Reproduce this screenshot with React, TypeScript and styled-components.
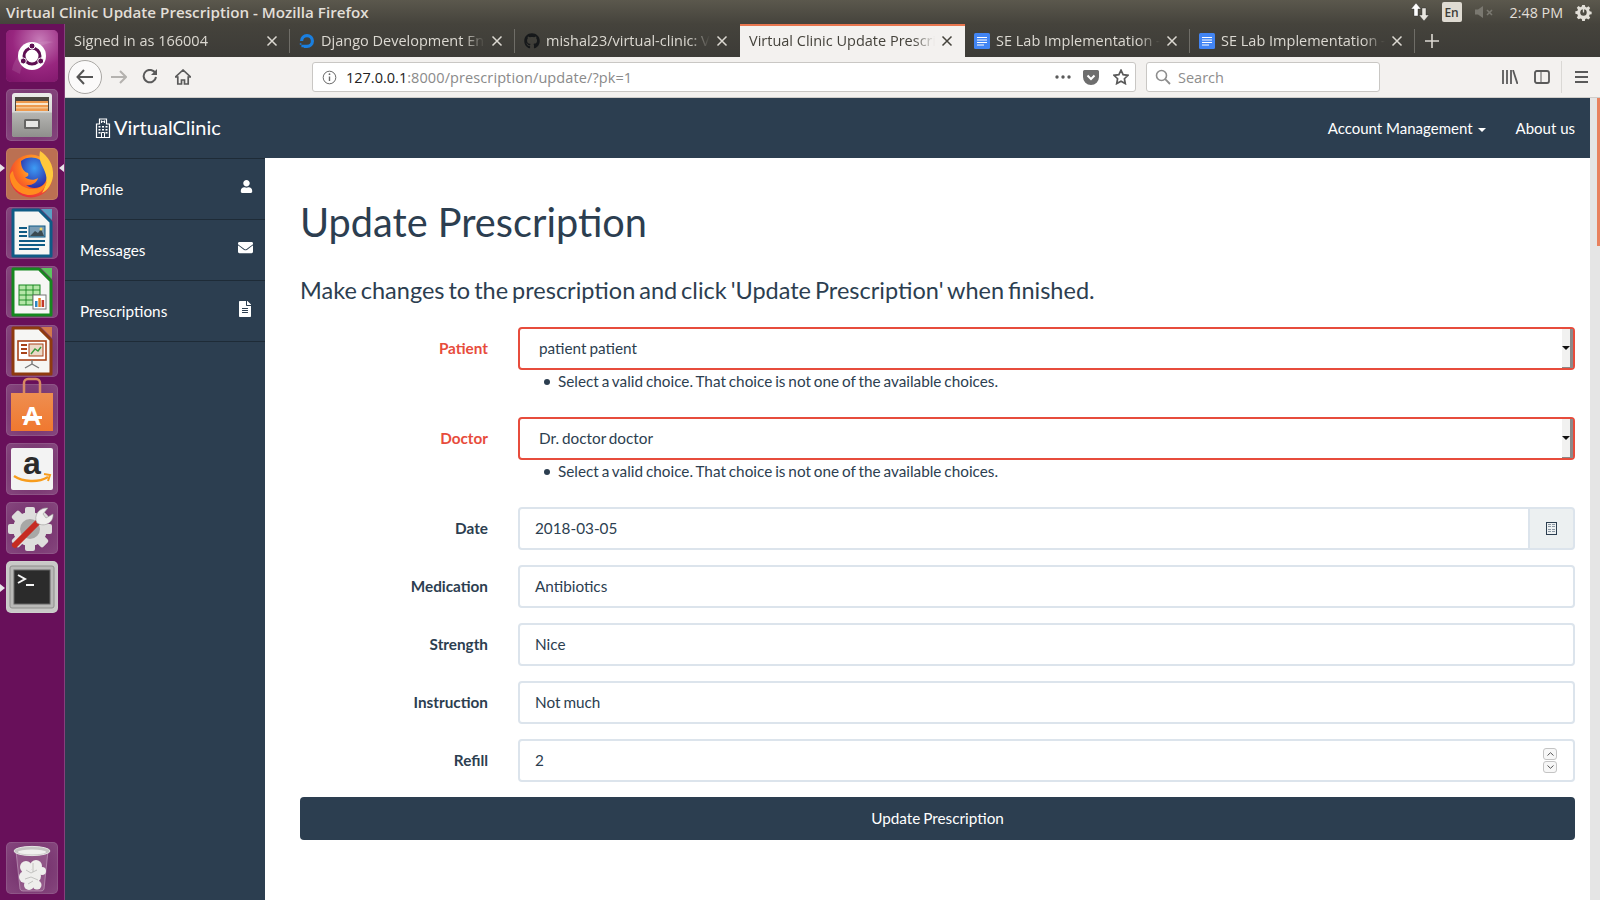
import React from "react";
import styled, { createGlobalStyle } from "styled-components";
import { FaGithub, FaUser, FaEnvelope, FaFileAlt } from "react-icons/fa";

const GlobalStyle = createGlobalStyle`
  html, body {
    margin: 0;
    padding: 0;
    height: 100%;
    overflow: hidden;
  }
  #root {
    height: 900px;
  }
  * {
    box-sizing: border-box;
  }
`;

const uiFont = `"Open Sans", "Noto Sans", sans-serif`;
const pageFont = `Lato, "Open Sans", sans-serif`;
const navy = "#2c3e50";
const red = "#e74c3c";

const Desktop = styled.div`
  width: 1600px;
  height: 900px;
  display: flex;
  flex-direction: column;
  overflow: hidden;
`;

const TopPanel = styled.div`
  height: 24px;
  flex: none;
  display: flex;
  align-items: center;
  justify-content: space-between;
  padding: 0 8px 0 6px;
  background: linear-gradient(#5b584d, #45433c);
  color: #e2dfd8;
  font: 600 15.2px ${uiFont};
`;

const PanelTray = styled.div`
  display: flex;
  align-items: center;
  height: 24px;
`;

const LangBox = styled.div`
  width: 20px;
  height: 20px;
  margin: 0 13px;
  border-radius: 2px;
  background: #dfdbd2;
  color: #3c3b37;
  font: 600 12px ${uiFont};
  display: flex;
  align-items: center;
  justify-content: center;
`;

const Clock = styled.span`
  margin: 0 12px 0 15px;
  font: 400 14.3px ${uiFont};
`;

const Workspace = styled.div`
  flex: 1;
  min-height: 0;
  display: flex;
`;

const Launcher = styled.div`
  width: 65px;
  flex: none;
  background: #68105a;
  border-right: 1px solid #86407c;
  display: flex;
  flex-direction: column;
  align-items: flex-start;
  gap: 7px;
  padding: 6px 0 6px 6px;
  position: relative;
`;

const Tile = styled.div<{ $tint: string; $push?: boolean }>`
  width: 52px;
  height: 52px;
  flex: none;
  border-radius: 5px;
  background: ${(p) => p.$tint};
  box-shadow: inset 0 0 0 1px rgba(255, 255, 255, 0.1);
  margin-top: ${(p) => (p.$push ? "auto" : "0")};
  display: flex;
  align-items: center;
  justify-content: center;
`;

const Pip = styled.div<{ $top: number; $right?: boolean }>`
  position: absolute;
  top: ${(p) => p.$top}px;
  left: ${(p) => (p.$right ? "59px" : "0")};
  width: 0;
  height: 0;
  border-top: 4px solid transparent;
  border-bottom: 4px solid transparent;
  ${(p) => (p.$right ? "border-right: 5px solid #e8e4e8;" : "border-left: 5px solid #e8e4e8;")}
`;

const Browser = styled.div`
  flex: 1;
  min-width: 0;
  display: flex;
  flex-direction: column;
`;

const TabStrip = styled.div`
  height: 33px;
  flex: none;
  display: flex;
  background: linear-gradient(#45433c, #3c3b37);
`;

const Tab = styled.div<{ $active?: boolean; $sep?: boolean }>`
  width: 225px;
  flex: none;
  position: relative;
  display: flex;
  align-items: center;
  gap: 6px;
  padding: 0 12px 0 9px;
  color: ${(p) => (p.$active ? "#45433c" : "#dcd9d2")};
  background: ${(p) => (p.$active ? "#f3f1ef" : "transparent")};
  box-shadow: ${(p) => (p.$active ? "inset 0 2px 0 #e8764f" : "none")};
  font: 400 14.5px ${uiFont};

  ${(p) =>
    p.$sep
      ? `&::after {
    content: "";
    position: absolute;
    right: 0;
    top: 5px;
    height: 24px;
    width: 1px;
    background: #6f6d67;
  }`
      : ""}
`;

const TabLabel = styled.span`
  flex: 1;
  min-width: 0;
  white-space: nowrap;
  overflow: hidden;
  -webkit-mask-image: linear-gradient(to right, #000 calc(100% - 22px), transparent);
  mask-image: linear-gradient(to right, #000 calc(100% - 22px), transparent);
`;

const NewTab = styled.div`
  width: 34px;
  display: flex;
  align-items: center;
  justify-content: center;
  color: #dcd9d2;
`;

const Toolbar = styled.div`
  height: 41px;
  flex: none;
  display: flex;
  align-items: center;
  padding-left: 3px;
  background: #f3f1ef;
  border-bottom: 1px solid #cfcdca;
  color: #5a5a5a;
`;

const BackButton = styled.div`
  width: 34px;
  height: 34px;
  flex: none;
  border-radius: 50%;
  border: 1px solid #a9a7a4;
  background: #fbfafa;
  display: flex;
  align-items: center;
  justify-content: center;
  color: #555;
`;

const ToolIcon = styled.div<{ $w: number; $faded?: boolean }>`
  width: ${(p) => p.$w}px;
  flex: none;
  display: flex;
  align-items: center;
  justify-content: center;
  color: ${(p) => (p.$faded ? "#b4b2af" : "#5a5a5a")};
`;

const Field = styled.div<{ $w: number }>`
  width: ${(p) => p.$w}px;
  height: 30px;
  flex: none;
  display: flex;
  align-items: center;
  background: #fff;
  border: 1px solid #c9c7c4;
  border-radius: 3px;
  font: 400 14.5px ${uiFont};
`;

const UrlHost = styled.span`
  color: #222;
`;

const UrlRest = styled.span`
  flex: 1;
  color: #8a8a8a;
  letter-spacing: 0.1px;
`;

const SearchText = styled.span`
  color: #8d8d8d;
`;

const ToolDivider = styled.div`
  width: 1px;
  height: 32px;
  flex: none;
  background: #dad8d5;
`;

const Page = styled.div`
  flex: 1;
  min-height: 0;
  display: flex;
  font: 400 15.3px/21.4px ${pageFont};
  word-spacing: -1px;
  color: ${navy};
  background: #fff;
`;

const PageMain = styled.div`
  flex: 1;
  min-width: 0;
  display: flex;
  flex-direction: column;
`;

const Navbar = styled.div`
  height: 60px;
  flex: none;
  display: flex;
  align-items: center;
  justify-content: space-between;
  padding: 1px 15px 0 30px;
  background: ${navy};
  color: #fff;
  font-size: 15px;
  word-spacing: 0;
`;

const Brand = styled.div`
  display: flex;
  align-items: center;
  gap: 3px;
  margin-top: -1px;
  font-size: 20px;
`;

const NavLinks = styled.div`
  display: flex;
  align-items: center;
  gap: 30px;
`;

const NavLink = styled.span`
  display: flex;
  align-items: center;
  gap: 5px;
`;

const Caret = styled.span`
  width: 0;
  height: 0;
  border-top: 4px solid #fff;
  border-left: 4px solid transparent;
  border-right: 4px solid transparent;
  margin-top: 2px;
`;

const Body = styled.div`
  flex: 1;
  min-height: 0;
  display: flex;
`;

const Sidebar = styled.div`
  width: 200px;
  flex: none;
  background: ${navy};
  color: #fff;
`;

const SideItem = styled.div`
  height: 61px;
  display: flex;
  align-items: center;
  justify-content: space-between;
  padding: 1px 12px 0 15px;
  border-top: 1px solid #1e2b37;

  &:last-child {
    height: 62px;
    border-bottom: 1px solid #1e2b37;
  }
`;

const SideIcon = styled.span`
  display: flex;
  margin-top: -6px;
`;

const Content = styled.div`
  flex: 1;
  min-width: 0;
  padding: 42px 15px 0 35px;
`;

const Title = styled.h1`
  margin: 0;
  font: 400 39.7px/43px ${pageFont};
  word-spacing: 0;
`;

const Lead = styled.h3`
  margin: 34px 0 24px;
  font: 400 23.5px/26px ${pageFont};
  word-spacing: -2.05px;
`;

const FormRow = styled.div`
  display: grid;
  grid-template-columns: 188px 1fr;
  column-gap: 30px;
  margin-bottom: 15px;
`;

const Label = styled.label<{ $error?: boolean }>`
  height: 43px;
  display: flex;
  align-items: center;
  justify-content: flex-end;
  padding-top: ${(p) => (p.$error ? "1px" : "0")};
  font-weight: 700;
  color: ${(p) => (p.$error ? red : navy)};
`;

const SelectBox = styled.div`
  height: 43px;
  display: flex;
  align-items: stretch;
  border: 2px solid ${red};
  border-radius: 4px;
  background: #fff;
`;

const SelectValue = styled.div`
  flex: 1;
  display: flex;
  align-items: center;
  padding: 1px 0 0 19px;
`;

const SelectArrow = styled.div`
  width: 11px;
  display: flex;
  align-items: center;
  justify-content: center;
  background: #f1f1f0;
  border-right: 3px solid #8a8a8a;
  border-bottom: 1px solid #8a8a8a;

  &::before {
    content: "";
    width: 0;
    height: 0;
    border-top: 4px solid #111;
    border-left: 4px solid transparent;
    border-right: 4px solid transparent;
  }
`;

const ErrorList = styled.ul`
  grid-column: 2;
  list-style: none;
  margin: 0;
  padding: 1px 0 0 26px;
  min-height: 32px;
`;

const ErrorItem = styled.li`
  display: flex;
  align-items: center;
  gap: 8px;

  &::before {
    content: "";
    width: 6px;
    height: 6px;
    flex: none;
    border-radius: 50%;
    background: ${navy};
  }
`;

const InputBox = styled.div`
  height: 43px;
  display: flex;
  align-items: center;
  justify-content: space-between;
  padding: 0 15px;
  background: #fff;
  border: 2px solid #dce4ec;
  border-radius: 4px;
`;

const DateGroup = styled.div`
  display: flex;
  height: 43px;
`;

const DateInput = styled(InputBox)`
  flex: 1;
  border-radius: 4px 0 0 4px;
`;

const DateAddon = styled.div`
  width: 45px;
  display: flex;
  align-items: center;
  justify-content: center;
  background: #ecf0f1;
  border: 2px solid #dce4ec;
  border-left: 0;
  border-radius: 0 4px 4px 0;
`;

const Spinner = styled.div`
  display: flex;
  flex-direction: column;
  gap: 1px;
  margin-right: 1px;
`;

const SpinStep = styled.div`
  width: 14px;
  height: 12px;
  border: 1px solid #c4c4c4;
  border-radius: 3px;
  display: flex;
  align-items: center;
  justify-content: center;
  background: #f7f7f7;
`;

const SubmitButton = styled.button`
  display: block;
  width: 100%;
  height: 43px;
  padding: 0 0 2px;
  border: 0;
  border-radius: 4px;
  background: ${navy};
  color: #fff;
  font: 400 15.3px ${pageFont};
  word-spacing: -1px;
`;

const Scrollbar = styled.div`
  width: 10px;
  flex: none;
  display: flex;
  justify-content: flex-end;
  background: #e5e5e5;
`;

const ScrollThumb = styled.div`
  width: 3px;
  height: 148px;
  background: #e8825f;
`;

function CloseIcon() {
  return (
    <svg width="12" height="12" viewBox="0 0 12 12" style={{ flex: "none" }}>
      <path d="M1.5 1.5l9 9M10.5 1.5l-9 9" stroke="currentColor" strokeWidth="1.5" />
    </svg>
  );
}

function DjangoIcon() {
  return (
    <svg width="16" height="16" viewBox="0 0 16 16" style={{ flex: "none" }}>
      <path d="M8 15v-3.200A3.800 3.800 0 1 0 4.200 8H1a7 7 0 1 1 7 7z" fill="#1a7fe0" />
      <path d="M4.800 11.800H8V15H4.800zM2.400 14.200h2.400v-2.400H2.400zM0.800 11.800h1.600v-1.600H0.800z" fill="#1a7fe0" />
    </svg>
  );
}

function DocIcon() {
  return (
    <svg width="16" height="16" viewBox="0 0 16 16" style={{ flex: "none" }}>
      <rect width="16" height="16" rx="1.5" fill="#4285f4" />
      <path d="M3 4.5h10M3 7h10M3 9.5h10M3 12h7" stroke="#fff" strokeWidth="1" />
    </svg>
  );
}

function HospitalIcon() {
  return (
    <svg width="16" height="20" viewBox="0 0 16 20" style={{ flex: "none" }}>
      <path d="M4.500 6V1h7v5h3v13.500h-13V6z" fill="none" stroke="#fff" strokeWidth="1.200" />
      <path d="M6.500 2.500v2.500M9.500 2.500v2.500M6.500 3.700h3" stroke="#fff" />
      <path
        d="M3.500 8h2v1.500h-2zM7 8h2v1.500H7zM10.500 8h2v1.500h-2zM3.500 11h2v1.500h-2zM7 11h2v1.500H7zM10.500 11h2v1.500h-2zM3.500 14h2v1.500h-2zM10.500 14h2v1.500h-2z"
        fill="#fff"
      />
      <path d="M6.500 19.500V14.500h3v5" fill="none" stroke="#fff" />
    </svg>
  );
}

function UbuntuLogo() {
  return (
    <svg width="52" height="52" viewBox="0 0 52 52">
      <defs>
        <radialGradient id="ubuBg" cx="0.65" cy="0.2" r="0.95">
          <stop offset="0" stopColor="#c77cb8" />
          <stop offset="0.55" stopColor="#98267f" />
          <stop offset="1" stopColor="#7e166a" />
        </radialGradient>
      </defs>
      <rect width="52" height="52" rx="5" fill="url(#ubuBg)" />
      <path d="M6 40C10 20 28 8 48 12 34 14 18 24 14 44z" fill="#fff" fillOpacity="0.1" />
      <circle cx="26" cy="26" r="14" fill="#fff" />
      <circle cx="26" cy="26" r="8" fill="none" stroke="#5e0f52" strokeWidth="3" />
      <circle cx="26" cy="16" r="3" fill="#5e0f52" stroke="#fff" />
      <circle cx="17.300" cy="31" r="3" fill="#5e0f52" stroke="#fff" />
      <circle cx="34.700" cy="31" r="3" fill="#5e0f52" stroke="#fff" />
    </svg>
  );
}

function FilesIcon() {
  return (
    <svg width="46" height="46" viewBox="0 0 46 46">
      <defs>
        <linearGradient id="cabTop" x1="0" y1="0" x2="0" y2="1">
          <stop offset="0" stopColor="#ececea" />
          <stop offset="1" stopColor="#bdbdba" />
        </linearGradient>
        <linearGradient id="cabFront" x1="0" y1="0" x2="0" y2="1">
          <stop offset="0" stopColor="#b8b8b5" />
          <stop offset="1" stopColor="#8f8f8c" />
        </linearGradient>
      </defs>
      <rect x="3" y="1" width="40" height="44" rx="3" fill="url(#cabTop)" />
      <rect x="6" y="5" width="34" height="15" fill="#4b463f" />
      <rect x="7" y="9" width="32" height="11" fill="#ee9a4d" />
      <rect x="7" y="11" width="32" height="2" fill="#f9e6cb" />
      <rect x="7" y="15" width="32" height="1.500" fill="#f5c58e" />
      <rect x="3" y="19" width="40" height="26" rx="2" fill="url(#cabFront)" />
      <rect x="3" y="19" width="40" height="1.500" fill="#d9d9d6" />
      <rect x="15" y="27" width="16" height="10" rx="1.500" fill="#656563" />
      <rect x="17" y="29" width="12" height="6" fill="#e8e8e6" />
    </svg>
  );
}

function FirefoxIcon() {
  return (
    <svg width="50" height="50" viewBox="0 0 50 50">
      <defs>
        <radialGradient id="foxBody" cx="0.6" cy="0.3" r="0.8">
          <stop offset="0" stopColor="#ffd23f" />
          <stop offset="0.45" stopColor="#ff7a1f" />
          <stop offset="1" stopColor="#e5203f" />
        </radialGradient>
        <radialGradient id="foxGlobe" cx="0.5" cy="0.35" r="0.65">
          <stop offset="0" stopColor="#3d9cf5" />
          <stop offset="1" stopColor="#2b2fa8" />
        </radialGradient>
      </defs>
      <circle cx="24" cy="27" r="21.500" fill="url(#foxBody)" />
      <path d="M14 12c8-6 20-4 25 5 3 6 2 13-2 18-5 5-13 5-18 1 5 1 11-2 12-7-4 3-10 2-13-1 3 0 4-2 3-4-4-1-7-5-7-12z" fill="url(#foxGlobe)" />
      <path d="M33 2c8 5 14 14 13 25-1 8-5 14-11 17 4-7 6-14 3-21-2-6-7-11-5-21z" fill="#ffc93c" />
      <path d="M6 22c1 10 9 18 20 18 6 0 11-3 14-8-2 9-9 14-17 14C12 46 3 37 3 27c0-2 1-4 3-5z" fill="#ff8c1f" />
    </svg>
  );
}

function DocSheet({ edge, fold, children }: { edge: string; fold: string; children: React.ReactNode }) {
  return (
    <svg width="42" height="50" viewBox="0 0 42 50">
      <path d="M2 2h26l12 12v34H2z" fill="#f6f6f4" stroke={edge} strokeWidth="3" strokeLinejoin="round" />
      <path d="M30 1h11v11z" fill={fold} />
      {children}
    </svg>
  );
}

function WriterIcon() {
  const tone = "#0f5b85";
  return (
    <DocSheet edge={tone} fold="#5aa0c4">
      <path d="M8 20h8M8 24h8M8 28h8M8 33h26M8 37h26M8 41h20" stroke={tone} strokeWidth="2" />
      <rect x="18" y="18" width="16" height="11" fill="#7a9cb4" stroke={tone} />
      <path d="M19 28l5-5 3 2 3-4 3 7z" fill="#3a4a52" />
      <circle cx="30" cy="21" r="1.500" fill="#f2d76a" />
    </DocSheet>
  );
}

function CalcIcon() {
  const tone = "#16871f";
  return (
    <DocSheet edge={tone} fold="#5cc45f">
      <rect x="8" y="18" width="21" height="20" fill="#b5e6a8" stroke={tone} />
      <path d="M8 23h21M8 28h21M8 33h21M15 18v20M22 18v20" stroke={tone} strokeWidth="0.900" />
      <rect x="22" y="28" width="13" height="14" fill="#fff" stroke="#777" />
      <rect x="24" y="34" width="2.500" height="6" fill="#2e86c1" />
      <rect x="27.300" y="31" width="2.500" height="9" fill="#e67e22" />
      <rect x="30.600" y="33" width="2.500" height="7" fill="#c0392b" />
    </DocSheet>
  );
}

function ImpressIcon() {
  const tone = "#a8431a";
  return (
    <DocSheet edge="#8e3a0f" fold="#d2794c">
      <rect x="7" y="15" width="28" height="19" fill="#fff" stroke={tone} strokeWidth="1.600" />
      <path d="M10 19h6M10 23h6M10 27h6" stroke={tone} strokeWidth="2" />
      <rect x="18" y="18" width="14" height="12" fill="#ecd9c8" stroke={tone} />
      <path d="M20 28l4-5 3 2 3-4" stroke="#3c9a3c" strokeWidth="1.400" fill="none" />
      <path d="M21 34v4M21 38l-7 4M21 38l7 4" stroke="#777" strokeWidth="1.400" />
    </DocSheet>
  );
}

function StoreIcon() {
  return (
    <svg width="44" height="54" viewBox="0 -8 44 54" style={{ overflow: "visible" }}>
      <defs>
        <linearGradient id="bagFill" x1="0" y1="0" x2="0" y2="1">
          <stop offset="0" stopColor="#ee8e50" />
          <stop offset="1" stopColor="#f0782f" />
        </linearGradient>
      </defs>
      <path d="M14 6V-8a4 4 0 0 1 4-4h8a4 4 0 0 1 4 4V6" fill="none" stroke="#d88a63" strokeWidth="2.500" />
      <path d="M1 2h42v38H1z" fill="url(#bagFill)" />
      <text x="22" y="34" textAnchor="middle" fontFamily="Liberation Sans, sans-serif" fontWeight="700" fontSize="26" fill="#fff">
        A
      </text>
      <rect x="12" y="25" width="20" height="3" fill="#fff" />
    </svg>
  );
}

function AmazonIcon() {
  return (
    <svg width="42" height="42" viewBox="0 0 42 42">
      <rect width="42" height="42" rx="2" fill="#f3f3f3" />
      <text x="21" y="26" textAnchor="middle" fontFamily="Liberation Sans, sans-serif" fontWeight="700" fontSize="32" fill="#2b2b2b">
        a
      </text>
      <path d="M3 28c9 6 24 7 34 1" stroke="#f79c1d" strokeWidth="2.400" fill="none" />
      <path d="M33 26l6 1-2 6" stroke="#f79c1d" strokeWidth="2" fill="none" />
    </svg>
  );
}

function ToolsIcon() {
  return (
    <svg width="48" height="48" viewBox="0 0 48 48">
      <g fill="#dededc">
        <circle cx="22" cy="25" r="17" />
        <rect x="17" y="3" width="10" height="44" rx="2" />
        <rect x="0" y="20" width="44" height="10" rx="2" />
        <rect x="17" y="3" width="10" height="44" rx="2" transform="rotate(45 22 25)" />
        <rect x="17" y="3" width="10" height="44" rx="2" transform="rotate(-45 22 25)" />
      </g>
      <circle cx="22" cy="25" r="10" fill="#a8a8a6" />
      <path d="M7 41L31 17" stroke="#c62c22" strokeWidth="6" strokeLinecap="round" />
      <path d="M29 19c-4-7 2-16 11-15l-5 6 3 4 7-4c1 8-8 14-16 9z" fill="#efefed" stroke="#9a9a98" strokeWidth="0.600" />
    </svg>
  );
}

function TerminalIcon() {
  return (
    <svg width="46" height="44" viewBox="0 0 46 44">
      <rect x="1" y="1" width="44" height="42" rx="2" fill="#b9b9b7" stroke="#8f8f8d" />
      <rect x="5" y="5" width="36" height="34" fill="#2b2b2b" stroke="#666" />
      <path d="M9 10l7 4-7 4" stroke="#f5f5f5" strokeWidth="2" fill="none" />
      <path d="M17 20h8" stroke="#f5f5f5" strokeWidth="2" />
    </svg>
  );
}

function TrashIcon() {
  return (
    <svg width="46" height="48" viewBox="0 0 46 48">
      <path d="M7 7l4 38a3 3 0 0 0 3 2h18a3 3 0 0 0 3-2l4-38z" fill="#a977a0" fillOpacity="0.5" stroke="#c9a8c4" strokeWidth="0.600" />
      <g fill="#eeeeec">
        <circle cx="17" cy="23" r="6" />
        <circle cx="27" cy="22" r="6" />
        <circle cx="33" cy="27" r="4" />
        <circle cx="16" cy="33" r="6" />
        <circle cx="25" cy="32" r="7" />
        <circle cx="20" cy="41" r="5" />
        <circle cx="28" cy="41" r="4.500" />
      </g>
      <path d="M17 26l5 3 6-3M16 35l6-2 7 3M24 19v9M19 40l5-3" stroke="#bdbdbb" strokeWidth="0.900" fill="none" />
      <ellipse cx="23" cy="7" rx="18" ry="4.600" fill="#c6c6c4" stroke="#e5e5e3" />
      <ellipse cx="23" cy="8" rx="14" ry="2.600" fill="#f0f0ee" />
    </svg>
  );
}

function CalendarIcon() {
  return (
    <svg width="11" height="13" viewBox="0 0 11 13">
      <rect x="0.500" y="0.500" width="10" height="12" fill="#ecf0f1" stroke={navy} />
      <path d="M2 2.500h3M6 2.500h3M2 4.500h3M6 4.500h3M2 7.500h3M6 7.500h3M2 9.500h3M6 9.500h3" stroke="#8a97a3" />
    </svg>
  );
}

function PanelArrows() {
  return (
    <svg width="18" height="18" viewBox="0 0 18 18">
      <path d="M5 0L0 6h3v7h4V6h3z" fill="#fff" stroke="#2a2a2a" strokeWidth="0.400" />
      <path d="M13 18l5-6h-3V5h-4v7H8z" fill="#e8e5df" stroke="#2a2a2a" strokeWidth="0.400" />
    </svg>
  );
}

function PanelMute() {
  return (
    <svg width="20" height="14" viewBox="0 0 20 14">
      <path d="M0 4.500h3L8 1v12L3 9.500H0z" fill="#7a7870" />
      <path d="M12 5l5 5M17 5l-5 5" stroke="#7a7870" strokeWidth="1.600" />
    </svg>
  );
}

function PanelPower() {
  return (
    <svg width="17" height="17" viewBox="-1 -1 19 19">
      <path
        d="M7 0h3l.4 2.200 1.700.7L14 1.600l2 2-1.300 1.900.7 1.700 2.200.4v2.800l-2.200.4-.7 1.700 1.300 1.900-2 2-1.900-1.300-1.700.7-.4 2.200H7l-.4-2.200-1.700-.7L3 16l-2-2 1.300-1.900-.7-1.700L-.6 10V7.200l2.200-.4.7-1.700L1 3.200l2-2 1.900 1.300 1.700-.7z"
        fill="#e2dfd8"
      />
      <circle cx="8.500" cy="8.500" r="3.600" fill="#4c4a42" />
      <path d="M8.500 3.500v5" stroke="#e2dfd8" strokeWidth="1.500" />
    </svg>
  );
}

const tabs = [
  { label: "Signed in as 166004", sep: true },
  { label: "Django Development Environment", icon: <DjangoIcon />, sep: true },
  { label: "mishal23/virtual-clinic: Virtual", icon: <FaGithub size={16} color="#16181a" style={{ flex: "none" }} /> },
  { label: "Virtual Clinic Update Prescription", active: true },
  { label: "SE Lab Implementation - Google", icon: <DocIcon />, sep: true },
  { label: "SE Lab Implementation - Google", icon: <DocIcon />, sep: true },
];

const plainFields = [
  { label: "Medication", value: "Antibiotics" },
  { label: "Strength", value: "Nice" },
  { label: "Instruction", value: "Not much" },
];

const errorText = "Select a valid choice. That choice is not one of the available choices.";

const tileTint = "radial-gradient(circle at 50% 50%, #6f2a67, #86477e)";

function App() {
  return (
    <Desktop>
      <GlobalStyle />
      <TopPanel>
        <span>Virtual Clinic Update Prescription - Mozilla Firefox</span>
        <PanelTray>
          <PanelArrows />
          <LangBox>En</LangBox>
          <PanelMute />
          <Clock>2:48 PM</Clock>
          <PanelPower />
        </PanelTray>
      </TopPanel>
      <Workspace>
        <Launcher>
          <Pip $top={140} />
          <Pip $top={140} $right />
          <Pip $top={560} />
          <Tile $tint="#8a1f77"><UbuntuLogo /></Tile>
          <Tile $tint={tileTint}><FilesIcon /></Tile>
          <Tile $tint="#bb7052"><FirefoxIcon /></Tile>
          <Tile $tint={tileTint}><WriterIcon /></Tile>
          <Tile $tint={tileTint}><CalcIcon /></Tile>
          <Tile $tint={tileTint}><ImpressIcon /></Tile>
          <Tile $tint={tileTint}><StoreIcon /></Tile>
          <Tile $tint={tileTint}><AmazonIcon /></Tile>
          <Tile $tint={tileTint}><ToolsIcon /></Tile>
          <Tile $tint="#c9c9c7"><TerminalIcon /></Tile>
          <Tile $tint={tileTint} $push><TrashIcon /></Tile>
        </Launcher>
        <Browser>
          <TabStrip>
            {tabs.map((tab, i) => (
              <Tab key={i} $active={tab.active} $sep={tab.sep}>
                {tab.icon}
                <TabLabel>{tab.label}</TabLabel>
                <CloseIcon />
              </Tab>
            ))}
            <NewTab>
              <svg width="14" height="14" viewBox="0 0 14 14">
                <path d="M7 0v14M0 7h14" stroke="currentColor" strokeWidth="1.600" />
              </svg>
            </NewTab>
          </TabStrip>
          <Toolbar>
            <BackButton>
              <svg width="18" height="16" viewBox="0 0 18 16">
                <path d="M8 1L1.500 8 8 15M2 8h15" stroke="currentColor" strokeWidth="2" fill="none" />
              </svg>
            </BackButton>
            <ToolIcon $w={32} $faded>
              <svg width="17" height="14" viewBox="0 0 17 14">
                <path d="M10 1l6 6-6 6M16 7H1" stroke="currentColor" strokeWidth="2" fill="none" />
              </svg>
            </ToolIcon>
            <ToolIcon $w={32}>
              <svg width="16" height="16" viewBox="0 0 16 16">
                <path d="M13.500 4.500A6.200 6.200 0 1 0 14 8" stroke="currentColor" strokeWidth="2" fill="none" />
                <path d="M15 0v6H9z" fill="currentColor" />
              </svg>
            </ToolIcon>
            <ToolIcon $w={34}>
              <svg width="16" height="16" viewBox="0 0 16 16">
                <path d="M8 1L0.500 8h2.300v7h3.700v-4h3v4h3.700V8h2.300z" fill="none" stroke="currentColor" strokeWidth="1.700" />
              </svg>
            </ToolIcon>
            <ToolIcon $w={112} />
            <Field $w={824}>
              <ToolIcon $w={33}>
                <svg width="15" height="15" viewBox="0 0 15 15">
                  <circle cx="7.500" cy="7.500" r="6.300" fill="none" stroke="#6a6a6a" />
                  <path d="M7.500 6.500v4.500" stroke="#6a6a6a" strokeWidth="1.400" />
                  <circle cx="7.500" cy="4.200" r="0.900" fill="#6a6a6a" />
                </svg>
              </ToolIcon>
              <UrlHost>127.0.0.1</UrlHost>
              <UrlRest>:8000/prescription/update/?pk=1</UrlRest>
              <ToolIcon $w={24}>
                <svg width="16" height="4" viewBox="0 0 16 4">
                  <circle cx="2" cy="2" r="1.700" fill="currentColor" />
                  <circle cx="8" cy="2" r="1.700" fill="currentColor" />
                  <circle cx="14" cy="2" r="1.700" fill="currentColor" />
                </svg>
              </ToolIcon>
              <ToolIcon $w={32}>
                <svg width="16" height="15" viewBox="0 0 16 15">
                  <path d="M1.500 0h13A1.500 1.500 0 0 1 16 1.500V7A8 8 0 0 1 0 7V1.500A1.500 1.500 0 0 1 1.500 0z" fill="#6e6e6e" />
                  <path d="M4.500 5.500L8 9l3.500-3.500" stroke="#fff" strokeWidth="2" fill="none" />
                </svg>
              </ToolIcon>
              <ToolIcon $w={28}>
                <svg width="16" height="16" viewBox="0 0 16 16">
                  <path d="M8 1.200l2.100 4.500 4.900.6-3.600 3.400.9 4.900L8 12.200l-4.300 2.400.9-4.900L1 6.300l4.900-.6z" fill="none" stroke="currentColor" strokeWidth="1.700" />
                </svg>
              </ToolIcon>
            </Field>
            <ToolIcon $w={10} />
            <Field $w={234}>
              <ToolIcon $w={31}>
                <svg width="16" height="16" viewBox="0 0 16 16">
                  <circle cx="6.500" cy="6.500" r="5" fill="none" stroke="#8d8d8d" strokeWidth="1.600" />
                  <path d="M10.200 10.200L15 15" stroke="#8d8d8d" strokeWidth="1.800" />
                </svg>
              </ToolIcon>
              <SearchText>Search</SearchText>
            </Field>
            <ToolIcon $w={114} />
            <ToolIcon $w={32}>
              <svg width="16" height="14" viewBox="0 0 16 14">
                <path d="M1 0v14M5 0v14M9 0v14M11 0l4.500 14" stroke="currentColor" strokeWidth="1.800" />
              </svg>
            </ToolIcon>
            <ToolIcon $w={32}>
              <svg width="16" height="14" viewBox="0 0 16 14">
                <rect x="1" y="1" width="14" height="12" rx="2" fill="none" stroke="currentColor" strokeWidth="1.800" />
                <rect x="1" y="1" width="6" height="12" rx="1" fill="none" stroke="currentColor" strokeWidth="1" />
              </svg>
            </ToolIcon>
            <ToolIcon $w={3} />
            <ToolDivider />
            <ToolIcon $w={39}>
              <svg width="13" height="12" viewBox="0 0 13 12">
                <path d="M0 1h13M0 6h13M0 11h13" stroke="currentColor" strokeWidth="1.800" />
              </svg>
            </ToolIcon>
          </Toolbar>
          <Page>
            <PageMain>
              <Navbar>
                <Brand>
                  <HospitalIcon />
                  VirtualClinic
                </Brand>
                <NavLinks>
                  <NavLink>
                    Account Management
                    <Caret />
                  </NavLink>
                  <NavLink>About us</NavLink>
                </NavLinks>
              </Navbar>
              <Body>
                <Sidebar>
                  <SideItem>
                    Profile
                    <SideIcon><FaUser size={13} /></SideIcon>
                  </SideItem>
                  <SideItem>
                    Messages
                    <SideIcon><FaEnvelope size={15} /></SideIcon>
                  </SideItem>
                  <SideItem>
                    Prescriptions
                    <SideIcon><FaFileAlt size={16} /></SideIcon>
                  </SideItem>
                </Sidebar>
                <Content>
                  <Title>Update Prescription</Title>
                  <Lead>Make changes to the prescription and click 'Update Prescription' when finished.</Lead>
                  <FormRow>
                    <Label $error>Patient</Label>
                    <SelectBox>
                      <SelectValue>patient patient</SelectValue>
                      <SelectArrow />
                    </SelectBox>
                    <ErrorList><ErrorItem>{errorText}</ErrorItem></ErrorList>
                  </FormRow>
                  <FormRow>
                    <Label $error>Doctor</Label>
                    <SelectBox>
                      <SelectValue>Dr. doctor doctor</SelectValue>
                      <SelectArrow />
                    </SelectBox>
                    <ErrorList><ErrorItem>{errorText}</ErrorItem></ErrorList>
                  </FormRow>
                  <FormRow>
                    <Label>Date</Label>
                    <DateGroup>
                      <DateInput>2018-03-05</DateInput>
                      <DateAddon><CalendarIcon /></DateAddon>
                    </DateGroup>
                  </FormRow>
                  {plainFields.map((f) => (
                    <FormRow key={f.label}>
                      <Label>{f.label}</Label>
                      <InputBox>{f.value}</InputBox>
                    </FormRow>
                  ))}
                  <FormRow>
                    <Label>Refill</Label>
                    <InputBox>
                      2
                      <Spinner>
                        <SpinStep>
                          <svg width="7" height="4" viewBox="0 0 7 4">
                            <path d="M0.500 3.500L3.500 0.700l3 2.800" stroke="#555" fill="none" />
                          </svg>
                        </SpinStep>
                        <SpinStep>
                          <svg width="7" height="4" viewBox="0 0 7 4">
                            <path d="M0.500 0.500L3.500 3.300l3-2.800" stroke="#555" fill="none" />
                          </svg>
                        </SpinStep>
                      </Spinner>
                    </InputBox>
                  </FormRow>
                  <SubmitButton>Update Prescription</SubmitButton>
                </Content>
              </Body>
            </PageMain>
            <Scrollbar>
              <ScrollThumb />
            </Scrollbar>
          </Page>
        </Browser>
      </Workspace>
    </Desktop>
  );
}

export default App;
